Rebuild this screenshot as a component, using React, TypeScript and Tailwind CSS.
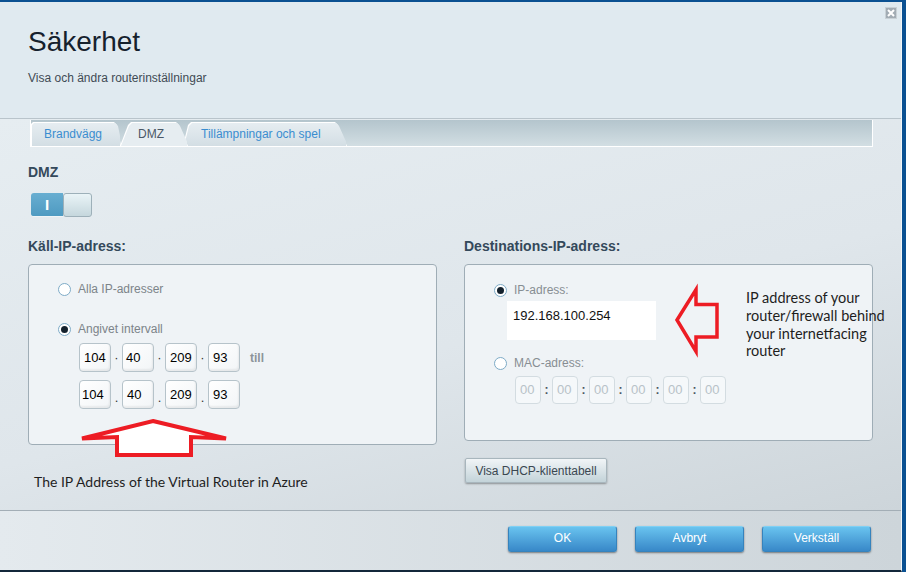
import React from "react";

function Radio({ checked }: { checked?: boolean }) {
  return (
    <span className="w-[13px] h-[13px] rounded-full border-[1.5px] border-[#7eabc7] bg-white flex items-center justify-center shrink-0">
      {checked && <span className="w-[7px] h-[7px] rounded-full bg-[#14212d]" />}
    </span>
  );
}

function IpBox({ v, pl = "pl-[4px]" }: { v: string; pl?: string }) {
  return (
    <div
      className={`w-[32px] h-[29px] rounded-[4px] border border-[#b6c3ca] bg-gradient-to-br from-white to-[#f2f5f7] shadow-[inset_-1px_-2px_2px_rgba(0,0,0,0.06)] text-[13px] leading-[16px] text-black flex items-center ${pl}`}
    >
      {v}
    </div>
  );
}

function MacBox() {
  return (
    <div className="w-[26px] h-[28px] rounded-[4px] border border-[#d3dce1] bg-[#f5f8fa] text-[13px] text-[#b8c2c8] flex items-center pl-[4px]">
      00
    </div>
  );
}

function Tab({
  label,
  active,
  className,
  clip,
  pl,
}: {
  label: string;
  active?: boolean;
  className: string;
  clip: string;
  pl: string;
}) {
  return (
    <div className={`relative h-[24px] shrink-0 ${className}`}>
      <div className={`absolute inset-0 bg-white ${clip}`} />
      <div
        className={`absolute inset-x-[1px] top-[1px] bottom-0 ${clip} ${
          active ? "bg-[#e6edf1]" : "bg-gradient-to-b from-[#e6edf1] to-[#d3dee4]"
        }`}
      />
      <div
        className={`relative h-full flex items-center ${pl} text-[12px] ${
          active ? "text-[#4a5766]" : "text-[#3a8dd0]"
        }`}
      >
        {label}
      </div>
    </div>
  );
}

function BlueButton({ label }: { label: string }) {
  return (
    <div className="w-[109px] h-[26px] rounded-[3px] border border-[#3683bd] border-t-[#7fd0f4] bg-gradient-to-b from-[#69c3ef] to-[#3888c8] text-white text-[12px] flex items-center justify-center pb-[2px] shadow-[0_1px_2px_rgba(0,0,0,0.45)]">
      {label}
    </div>
  );
}

export default function App() {
  return (
    <div className="relative w-[906px] h-[572px] overflow-hidden bg-[#0b5192] pt-[2px] font-['Liberation_Sans',Arial,sans-serif]">
      <div className="w-[902px] h-[570px] flex flex-col border-r border-r-[#f2f6f8] border-b-2 border-b-[#13273a]">
        {/* Header */}
        <div className="h-[117px] shrink-0 bg-[#e0eaf0] border-b border-[#b9c4cb] pl-[28px] pt-[23px]">
          <div className="text-[28px] leading-[34px] text-[#15212d]">Säkerhet</div>
          <div className="mt-[11px] text-[12px] leading-[16px] text-[#3f4a54]">
            Visa och ändra routerinställningar
          </div>
        </div>

        {/* Content */}
        <div className="flex-1 bg-[linear-gradient(165deg,#e6edf1_0%,#dfe6eb_55%,#cdd5da_100%)] pl-[28px] pt-[1px]">
          {/* tab bar */}
          <div className="ml-[2px] w-[843px] h-[27px] bg-gradient-to-b from-[#b4c5cd] to-[#d2dee3] border-l border-r border-b border-white flex items-end">
            <Tab
              label="Brandvägg"
              className="w-[90px] z-0"
              clip="[clip-path:polygon(0_2px,2px_0,83px_0,86px_3px,90px_100%,0_100%)]"
              pl="pl-[13px]"
            />
            <Tab
              label="DMZ"
              active
              className="w-[68px] ml-[-1px] z-20"
              clip="[clip-path:polygon(0_100%,8px_3px,11px_0,56px_0,59px_3px,68px_100%)]"
              pl="pl-[18px]"
            />
            <Tab
              label="Tillämpningar och spel"
              className="w-[164px] ml-[-5px] z-10"
              clip="[clip-path:polygon(0_100%,5px_3px,8px_0,152px_0,155px_3px,164px_100%)]"
              pl="pl-[18px]"
            />
          </div>

          <div className="mt-[17px] text-[14px] font-bold leading-[17px] text-[#34495b]">DMZ</div>

          {/* toggle */}
          <div className="mt-[12px] ml-[3px] flex w-[61px] h-[24px]">
            <div className="w-[32px] h-full rounded-l-[3px] bg-gradient-to-b from-[#68aed1] to-[#4e9ac1] flex items-center justify-center text-white font-bold text-[15px] leading-none border-b border-[#eef4f7]">
              I
            </div>
            <div className="w-[29px] h-full rounded-[3px] border border-[#9db0b9] bg-gradient-to-b from-[#eaf4f7] to-[#c5d7dd]" />
          </div>

          {/* columns */}
          <div className="mt-[21px] flex gap-[26px]">
            <div className="w-[410px]">
              <div className="text-[14px] font-bold leading-[17px] text-[#34495b]">Käll-IP-adress:</div>
              <div className="mt-[9px] w-[409px] h-[181px] rounded-[4px] border border-[#9fadb6] bg-[#eff3f6] pl-[29px] pt-[16px]">
                <div className="flex items-center h-[16px] gap-[7px] text-[12px] text-[#7c8489]">
                  <Radio />
                  <span>Alla IP-adresser</span>
                </div>
                <div className="mt-[24px] flex items-center h-[16px] gap-[7px] text-[12px] text-[#7c8489]">
                  <Radio checked />
                  <span>Angivet intervall</span>
                </div>
                <div className="mt-[6px] ml-[21px] flex items-center">
                  <IpBox v="104" />
                  <span className="w-[11px] text-center text-[13px] text-[#333]">·</span>
                  <IpBox v="40" pl="pl-[3px]" />
                  <span className="w-[11px] text-center text-[13px] text-[#333]">·</span>
                  <IpBox v="209" />
                  <span className="w-[11px] text-center text-[13px] text-[#333]">·</span>
                  <IpBox v="93" />
                  <span className="ml-[10px] text-[12px] font-bold text-[#8c949a]">till</span>
                </div>
                <div className="mt-[8px] ml-[21px] flex items-end">
                  <IpBox v="104" pl="pl-[2px]" />
                  <span className="w-[11px] text-center text-[13px] leading-[22px] text-[#333]">.</span>
                  <IpBox v="40" />
                  <span className="w-[11px] text-center text-[13px] leading-[22px] text-[#333]">.</span>
                  <IpBox v="209" />
                  <span className="w-[11px] text-center text-[13px] leading-[22px] text-[#333]">.</span>
                  <IpBox v="93" />
                </div>
              </div>
              <div className="mt-[28px] pl-[6px] font-['Lato',sans-serif] text-[14px] leading-[18px] text-[#1e1e1e]">
                The IP Address of the Virtual Router in Azure
              </div>
            </div>

            <div className="w-[409px]">
              <div className="text-[14px] font-bold leading-[17px] text-[#34495b]">Destinations-IP-adress:</div>
              <div className="mt-[9px] w-[409px] h-[177px] rounded-[4px] border border-[#9fadb6] bg-[#eff3f6] pl-[29px] pt-[17px]">
                <div className="flex items-center h-[16px] gap-[7px] text-[12px] text-[#878e93]">
                  <Radio checked />
                  <span>IP-adress:</span>
                </div>
                <div className="mt-[3px] ml-[13px] w-[149px] h-[39px] bg-white pl-[6px] pt-[7px] text-[13px] leading-[16px] text-[#111]">
                  192.168.100.254
                </div>
                <div className="mt-[15px] flex items-center h-[16px] gap-[7px] text-[12px] text-[#878e93]">
                  <Radio />
                  <span>MAC-adress:</span>
                </div>
                <div className="mt-[5px] ml-[21px] flex items-center">
                  <MacBox />
                  <span className="w-[11px] text-center text-[12px] font-bold text-[#4a5560]">:</span>
                  <MacBox />
                  <span className="w-[11px] text-center text-[12px] font-bold text-[#4a5560]">:</span>
                  <MacBox />
                  <span className="w-[11px] text-center text-[12px] font-bold text-[#4a5560]">:</span>
                  <MacBox />
                  <span className="w-[11px] text-center text-[12px] font-bold text-[#4a5560]">:</span>
                  <MacBox />
                  <span className="w-[11px] text-center text-[12px] font-bold text-[#4a5560]">:</span>
                  <MacBox />
                </div>
              </div>
              <div className="mt-[17px] ml-[1px] w-[142px] h-[25px] rounded-[2px] border border-[#a8b6bd] bg-gradient-to-b from-[#f1f5f7] to-[#c3d3d9] text-[12px] text-[#3a4751] flex items-center justify-center shadow-[0_1px_2px_rgba(0,0,0,0.35)]">
                Visa DHCP-klienttabell
              </div>
            </div>
          </div>
        </div>

        {/* Footer */}
        <div className="h-[60px] shrink-0 border-t border-[#a3aeb6] bg-gradient-to-r from-[#e4eaee] to-[#cdd5da] flex justify-end gap-[18px] pt-[15px] pr-[30px]">
          <BlueButton label="OK" />
          <BlueButton label="Avbryt" />
          <BlueButton label="Verkställ" />
        </div>
      </div>

      {/* close button */}
      <div className="absolute left-[885px] top-[7px] w-[12px] h-[12px] bg-[#a2acb4] border border-[#c9d1d6] flex items-center justify-center">
        <svg width="8" height="8" viewBox="0 0 8 8">
          <path d="M1 1 L7 7 M7 1 L1 7" stroke="#ffffff" strokeWidth="2" />
        </svg>
      </div>

      {/* annotation arrows */}
      <svg className="absolute left-0 top-0 pointer-events-none" width="906" height="572" viewBox="0 0 906 572">
        <polygon
          points="153,421 226,438.5 191,437 191,455 117,455 117,437 82,438.5"
          fill="#ffffff"
          stroke="#ed1c24"
          strokeWidth="4"
          strokeLinejoin="miter"
        />
        <polygon
          points="677,320 696,289.5 696,304.5 717,304.5 717,337 696,337 696,351.5"
          fill="none"
          stroke="#ed1c24"
          strokeWidth="3.5"
          strokeLinejoin="miter"
        />
      </svg>

      <div className="absolute left-[746px] top-[289px] font-['Lato',sans-serif] text-[14.5px] leading-[17.8px] text-[#1e1e1e]">
        <div>IP address of your</div>
        <div>router/firewall behind</div>
        <div>your internetfacing</div>
        <div>router</div>
      </div>
    </div>
  );
}
